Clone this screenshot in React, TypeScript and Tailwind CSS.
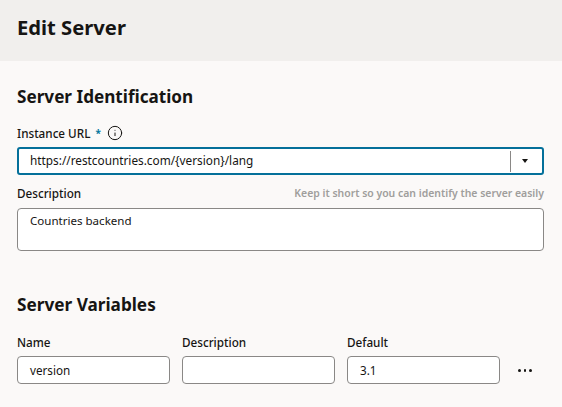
import { Info } from 'lucide-react'

const font = { fontFamily: '"Noto Sans", sans-serif' }

function VariableField({ label, value }: { label: string; value?: string }) {
  return (
    <div className="w-[153px] shrink-0">
      <div className="h-[18px] text-[11.7px] leading-[18px] font-medium text-[#161513]">{label}</div>
      <div className="mt-[5px] h-[28px] rounded-[4px] border border-[#8a8886] bg-white px-[12px] text-[11.7px] leading-[26px] text-[#161513]">
        {value}
      </div>
    </div>
  )
}

export default function App() {
  return (
    <div style={font} className="h-[407px] w-[562px] overflow-hidden bg-[#fbf9f8] text-[#161513]">
      {/* Header */}
      <header className="flex h-[61px] items-center bg-[#f1efed] px-[17px]">
        <h1 className="text-[20.2px] leading-[28px] font-bold -mt-[7px]">Edit Server</h1>
      </header>

      <main className="px-[17px]">
        <h2 className="pt-[23px] text-[17.15px] leading-[26px] font-bold">Server Identification</h2>

        <div className="mt-[14px] flex h-[18px] items-center text-[11.7px] leading-[18px] font-medium">
          <span>Instance URL</span>
          <span className="ml-[5px] text-[10px] font-bold text-[#04769e]">*</span>
          <Info className="ml-[6px] h-[16px] w-[16px]" strokeWidth={1.5} />
        </div>

        <div className="mt-[5px] flex h-[28px] w-[527px] items-center rounded-[3px] border-2 border-[#04709a] bg-white pl-[11px] text-[11.8px]">
          <span className="flex-1">https://restcountries.com/{'{version}'}/lang</span>
          <div className="mr-[4px] flex h-[21px] w-[28px] items-center justify-center border-l border-[#8a8886]">
            <div className="h-0 w-0 border-x-[3.5px] border-t-[4px] border-x-transparent border-t-[#161513]" />
          </div>
        </div>

        <div className="mt-[9px] flex h-[18px] w-[527px] items-center justify-between text-[11.7px] leading-[18px] font-medium">
          <span>Description</span>
          <span className="text-[10.45px] font-semibold text-[#a09e9c]">Keep it short so you can identify the server easily</span>
        </div>

        <div className="mt-[6px] h-[43px] w-[527px] rounded-[4px] border border-[#8a8886] bg-white px-[12px] pt-[3px] text-[11.55px] leading-[18px]">
          Countries backend
        </div>

        <h2 className="mt-[41px] text-[17.2px] leading-[26px] font-bold">Server Variables</h2>

        <div className="mt-[15px] flex items-start gap-[12px]">
          <VariableField label="Name" value="version" />
          <VariableField label="Description" />
          <VariableField label="Default" value="3.1" />
          <div className="ml-[6px] mt-[36px] flex gap-[3px]">
            <div className="h-[2.5px] w-[2.5px] rounded-full bg-[#161513]" />
            <div className="h-[2.5px] w-[2.5px] rounded-full bg-[#161513]" />
            <div className="h-[2.5px] w-[2.5px] rounded-full bg-[#161513]" />
          </div>
        </div>
      </main>
    </div>
  )
}
